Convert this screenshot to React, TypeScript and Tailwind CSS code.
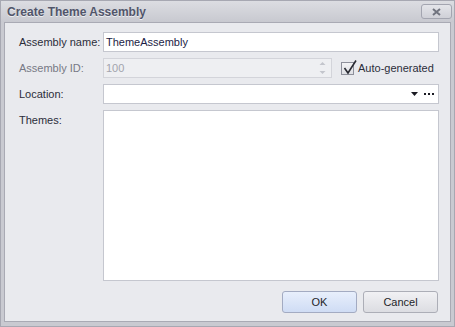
const labelCls = "flex h-5 items-center text-[11px] text-[#2b2d3a]";
const inputCls = "h-5 border border-[#c5c7cf] bg-white";

export default function App(): JSX.Element {
  return (
    <div
      className="flex h-[327px] w-[455px] flex-col border border-[#a7a8b2] bg-[#c9cad1]"
      style={{ fontFamily: '"Liberation Sans", Arial, sans-serif' }}>
      {/* title bar */}
      <div className="flex h-[21px] items-center justify-between bg-gradient-to-b from-[#dcdde2] to-[#c8c9d0] pl-[6px] pr-[2px]">
        <span className="text-[12px] font-bold text-[#51556a] [text-shadow:0_1px_0_#eceef2]">
          Create Theme Assembly
        </span>
        <button className="flex h-[15px] w-[31px] items-center justify-center rounded-[3px] border border-[#a3a5b0] bg-gradient-to-b from-[#e4e5ea] to-[#cfd0d7]">
          <svg width="9" height="8" viewBox="0 0 9 8">
            <path d="M1 1 L8 7 M8 1 L1 7" stroke="#71747f" strokeWidth="2" />
          </svg>
        </button>
      </div>

      {/* content */}
      <div className="mx-[3px] mb-[4px] flex flex-1 flex-col border border-[#a9aab4] bg-[#e9eaee] pb-[8px] pl-[14px] pr-[11px] pt-[9px]">
        <div className="grid flex-1 grid-cols-[84px_1fr] grid-rows-[20px_20px_20px_1fr] gap-y-[6px]">
          <div className={labelCls}>Assembly name:</div>
          <div className={`${inputCls} flex items-center px-[2px] text-[11px] text-[#1c1d45]`}>
            ThemeAssembly
          </div>

          <div className="flex h-5 items-center text-[11px] text-[#777985]">Assembly ID:</div>
          <div className="flex items-center">
            <div className="flex h-5 w-[229px] items-center justify-between border border-[#d3d4da] bg-[#eeeff2] pl-[2px] pr-[5px] text-[11px] text-[#a2a4ad]">
              <span>100</span>
              <svg width="7" height="14" viewBox="0 0 7 14">
                <path d="M0.5 4 L3.5 1 L6.5 4 Z" fill="#c3c5cc" />
                <path d="M0.5 10 L3.5 13 L6.5 10 Z" fill="#c3c5cc" />
              </svg>
            </div>
            <div className="ml-[9px] flex items-center">
              <div className="relative h-[13px] w-[13px] border border-[#8e909b] bg-gradient-to-b from-[#f3f3f5] to-[#dfe0e5]">
                <svg className="absolute -top-[4px] left-[1px]" width="14" height="16" viewBox="0 0 14 16">
                  <path d="M1.5 9 L5 14 L13 1.5" stroke="#2a2b33" strokeWidth="1.6" fill="none" />
                </svg>
              </div>
              <span className="ml-[4px] text-[11px] text-[#2b2d3a]">Auto-generated</span>
            </div>
          </div>

          <div className={labelCls}>Location:</div>
          <div className={`${inputCls} flex items-center justify-end gap-[6px] pr-[4px]`}>
            <svg width="7" height="4" viewBox="0 0 7 4">
              <path d="M0 0 L7 0 L3.5 4 Z" fill="#1a1a22" />
            </svg>
            <div className="flex gap-[2px]">
              <div className="h-[2px] w-[2px] bg-[#1a1a22]" />
              <div className="h-[2px] w-[2px] bg-[#1a1a22]" />
              <div className="h-[2px] w-[2px] bg-[#1a1a22]" />
            </div>
          </div>

          <div className="flex items-start">
            <div className={labelCls}>Themes:</div>
          </div>
          <div className="border border-[#c5c7cf] bg-white" />
        </div>

        <div className="mt-[10px] flex justify-end gap-[6px] pr-[1px]">
          <button className="h-[22px] w-[75px] rounded-[3px] border border-[#a3abc2] bg-gradient-to-b from-[#e8effc] to-[#cfdcf4] text-[11px] text-[#1e1f28]">
            OK
          </button>
          <button className="h-[22px] w-[75px] rounded-[3px] border border-[#acaeb7] bg-gradient-to-b from-[#f1f1f4] to-[#dcdde2] text-[11px] text-[#1e1f28]">
            Cancel
          </button>
        </div>
      </div>
    </div>
  );
}
